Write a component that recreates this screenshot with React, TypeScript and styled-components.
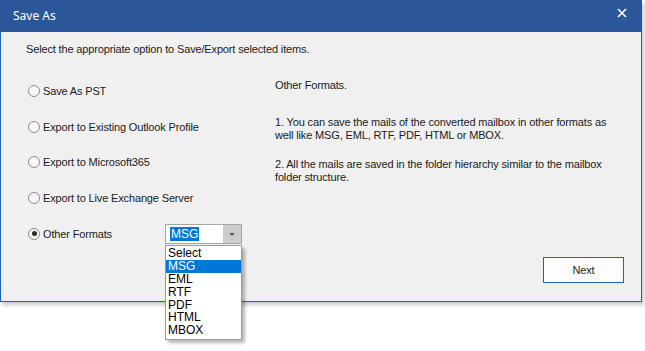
import React from "react";
import styled, { createGlobalStyle } from "styled-components";

const Global = createGlobalStyle`
  html, body { margin: 0; padding: 0; background: #ffffff; }
  html, body, #root { min-height: 100vh; }
  body { font-family: "Liberation Sans", Arial, sans-serif; }
  * { box-sizing: border-box; }
`;

const Dialog = styled.div`
  width: 642px;
  height: 302px;
  display: flex;
  flex-direction: column;
  background: #f0f0f0;
  border: 1px solid #1f62c3;
  border-top: none;
  box-shadow: 2px 3px 4px rgba(0, 0, 0, 0.22);
`;

const TitleBar = styled.div`
  height: 32px;
  flex: none;
  background: #2b579a;
  display: flex;
  align-items: center;
  justify-content: space-between;
  padding: 0 0 2px 13px;
  margin: 0 -1px;
`;

const Title = styled.span`
  font-family: "Noto Sans", "Open Sans", sans-serif;
  font-size: 12px;
  color: #ffffff;
`;

const CloseBtn = styled.div`
  width: 40px;
  height: 30px;
  display: flex;
  align-items: center;
  justify-content: center;
  padding-bottom: 4px;
`;

const Body = styled.div`
  flex: 1;
  display: flex;
  flex-direction: column;
  padding: 10px 17px 0 25px;
  color: #1b1b1b;
  font-size: 11px;
  letter-spacing: -0.15px;
`;

const Intro = styled.div`
  height: 14px;
  line-height: 14px;
`;

const Content = styled.div`
  display: grid;
  grid-template-columns: 249px 1fr;
  margin-top: 17px;
`;

const Options = styled.div`
  display: flex;
  flex-direction: column;
`;

const OptionRow = styled.div`
  height: 35.75px;
  display: flex;
  align-items: center;
  position: relative;
`;

const Radio = styled.span<{ $checked?: boolean }>`
  width: 12px;
  height: 12px;
  border-radius: 50%;
  border: 1px solid #8c8c8c;
  background: #f8f8f8;
  display: flex;
  align-items: center;
  justify-content: center;
  margin-left: 2px;
  margin-right: 3px;
  &::after {
    content: "";
    width: 5px;
    height: 5px;
    border-radius: 50%;
    background: ${(p) => (p.$checked ? "#2a2a2a" : "transparent")};
  }
`;

const Label = styled.span`
  line-height: 14px;
`;

const ComboWrap = styled.div`
  position: absolute;
  left: 139px;
  top: 8px;
  width: 77px;
  letter-spacing: 0;
  z-index: 2;
`;

const Combo = styled.div`
  width: 77px;
  height: 20px;
  border: 1px solid #a6a6a6;
  background: #ffffff;
  display: flex;
  align-items: center;
  padding: 0 0 0 4px;
  font-size: 12px;
`;

const ComboText = styled.span`
  background: #0078d7;
  color: #ffffff;
  line-height: 14px;
  padding: 0 1px;
  flex: none;
`;

const ComboArrow = styled.div`
  margin-left: auto;
  width: 18px;
  height: 18px;
  background: #cccccc;
  display: flex;
  align-items: center;
  justify-content: center;
  &::after {
    content: "";
    border-left: 3px solid transparent;
    border-right: 3px solid transparent;
    border-top: 3px solid #606060;
  }
`;

const List = styled.div`
  position: absolute;
  top: 21px;
  left: 0;
  width: 77px;
  border: 1px solid #9a9a9a;
  background: #ffffff;
  box-shadow: 3px 3px 3px rgba(0, 0, 0, 0.28);
  padding: 1px 0 2px;
  display: flex;
  flex-direction: column;
`;

const ListItem = styled.div<{ $selected?: boolean }>`
  height: 12.9px;
  line-height: 13px;
  font-size: 12px;
  padding-left: 2px;
  color: ${(p) => (p.$selected ? "#ffffff" : "#000000")};
  background: ${(p) => (p.$selected ? "#0078d7" : "transparent")};
`;

const Description = styled.div`
  padding-top: 6px;
  display: flex;
  flex-direction: column;
`;

const Para = styled.p<{ $gap: number }>`
  margin: ${(p) => p.$gap}px 0 0 0;
  line-height: 13px;
  width: 340px;
`;

const Footer = styled.div`
  display: flex;
  justify-content: flex-end;
  margin-top: 5px;
`;

const NextButton = styled.button`
  width: 81px;
  height: 26px;
  background: #fdfdfd;
  border: 1px solid #1a64c8;
  font-family: "Liberation Sans", Arial, sans-serif;
  font-size: 11px;
  letter-spacing: -0.15px;
  color: #1b1b1b;
  padding: 0;
`;

const options = [
  "Save As PST",
  "Export to Existing Outlook Profile",
  "Export to Microsoft365",
  "Export to Live Exchange Server",
];

const formats = ["Select", "MSG", "EML", "RTF", "PDF", "HTML", "MBOX"];

export default function App() {
  return (
    <>
      <Global />
      <Dialog>
        <TitleBar>
          <Title>Save As</Title>
          <CloseBtn>
            <svg width="10" height="10" viewBox="0 0 10 10">
              <path d="M1 1 L9 9 M9 1 L1 9" stroke="#ffffff" strokeWidth="1.6" />
            </svg>
          </CloseBtn>
        </TitleBar>
        <Body>
          <Intro>Select the appropriate option to Save/Export selected items.</Intro>
          <Content>
            <Options>
              {options.map((o) => (
                <OptionRow key={o}>
                  <Radio />
                  <Label>{o}</Label>
                </OptionRow>
              ))}
              <OptionRow>
                <Radio $checked />
                <Label>Other Formats</Label>
                <ComboWrap>
                  <Combo>
                    <ComboText>MSG</ComboText>
                    <ComboArrow />
                  </Combo>
                  <List>
                    {formats.map((f) => (
                      <ListItem key={f} $selected={f === "MSG"}>
                        {f}
                      </ListItem>
                    ))}
                  </List>
                </ComboWrap>
              </OptionRow>
            </Options>
            <Description>
              <Para $gap={0}>Other Formats.</Para>
              <Para $gap={24}>
                1. You can save the mails of the converted mailbox in other formats as well like MSG, EML, RTF,
                PDF, HTML or MBOX.
              </Para>
              <Para $gap={16}>
                2. All the mails are saved in the folder hierarchy similar to the mailbox folder structure.
              </Para>
            </Description>
          </Content>
          <Footer>
            <NextButton>Next</NextButton>
          </Footer>
        </Body>
      </Dialog>
    </>
  );
}
